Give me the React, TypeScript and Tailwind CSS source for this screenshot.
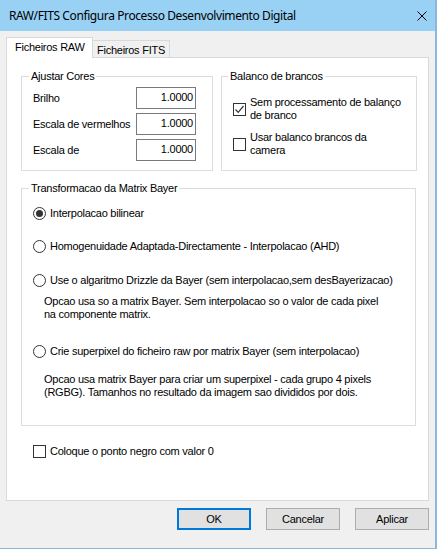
import React from 'react';

const ui = { fontFamily: '"Liberation Sans", Arial, sans-serif' };
const title = { fontFamily: '"Noto Sans", "Open Sans", sans-serif' };

function Check({ checked }: { checked?: boolean }) {
  return (
    <span className="w-[13px] h-[13px] shrink-0 border border-[#333333] bg-white flex items-center justify-center">
      {checked && (
        <svg width="11" height="11" viewBox="0 0 11 11">
          <path d="M1.5 5.5 L4.2 8.3 L9.5 2" fill="none" stroke="#333333" strokeWidth="1.2" />
        </svg>
      )}
    </span>
  );
}

function Radio({ checked }: { checked?: boolean }) {
  return (
    <span className="w-[13px] h-[13px] shrink-0 rounded-full border border-[#333333] bg-white flex items-center justify-center">
      {checked && <span className="w-[7px] h-[7px] rounded-full bg-[#333333]" />}
    </span>
  );
}

function ValueRow({ label }: { label: string }) {
  return (
    <div className="flex items-center justify-between h-[22px]">
      <span>{label}</span>
      <div className="w-[60px] h-[22px] border border-[#7a7a7a] bg-white text-right pr-[2px] leading-[18px]">
        1.0000
      </div>
    </div>
  );
}

export default function App() {
  return (
    <div className="w-[440px] h-[550px] bg-white text-[11px] leading-[13px] tracking-[-0.25px] text-black" style={ui}>
      <div className="w-[437px] h-[549px] flex flex-col bg-[#f0f0f0] border-r-2 border-b border-[#8ab8dd]">
        {/* title bar */}
        <div className="h-[31px] shrink-0 bg-[#99d1f5] flex items-center justify-between pl-[9px] pr-[8px]">
          <span className="text-[12px] tracking-[-0.4px]" style={title}>RAW/FITS Configura Processo Desenvolvimento Digital</span>
          <svg width="10" height="10" viewBox="0 0 10 10">
            <path d="M0.5 0.5 L9.5 9.5 M9.5 0.5 L0.5 9.5" stroke="#000" strokeWidth="1" />
          </svg>
        </div>

        <div className="pl-[6px] pt-[6px] flex flex-col">
          {/* tabs */}
          <div className="flex items-end h-[20px]">
            <div className="relative z-10 w-[87px] h-[21px] -mb-px bg-white border-l border-t border-r border-[#d9d9d9] pl-[8px] pt-[3px]">
              Ficheiros RAW
            </div>
            <div className="w-[77px] h-[17px] border-t border-r border-[#d9d9d9] pl-[4px] pt-[3px]">
              Ficheiros FITS
            </div>
          </div>

          {/* panel */}
          <div className="w-[423px] h-[444px] bg-white border border-[#d9d9d9] pl-[14px] pt-[12px]">
            <div className="flex gap-[8px]">
              <fieldset className="w-[192px] border border-[#dcdcdc]">
                <legend className="ml-[7px] px-[2px]">Ajustar Cores</legend>
                <div className="pt-[4px] pl-[11px] pr-[16px] pb-[9px] flex flex-col gap-[4px]">
                  <ValueRow label="Brilho" />
                  <ValueRow label="Escala de vermelhos" />
                  <ValueRow label="Escala de" />
                </div>
              </fieldset>
              <fieldset className="w-[196px] border border-[#dcdcdc]">
                <legend className="ml-[6px] px-[2px]">Balanco de brancos</legend>
                <div className="pt-[13px] pl-[11px] flex flex-col gap-[9px]">
                  <div className="flex items-center gap-[4px]">
                    <Check checked />
                    <span>Sem processamento de balanço<br />de branco</span>
                  </div>
                  <div className="flex items-center gap-[4px]">
                    <Check />
                    <span>Usar balanco brancos da<br />camera</span>
                  </div>
                </div>
              </fieldset>
            </div>

            <fieldset className="w-[395px] mt-[11px] border border-[#dcdcdc]">
              <legend className="ml-[7px] px-[2px]">Transformacao da Matrix Bayer</legend>
              <div className="pt-[12px] pl-[11px] pb-[26px] flex flex-col">
                <div className="flex items-center gap-[4px]">
                  <Radio checked />
                  <span>Interpolacao bilinear</span>
                </div>
                <div className="flex items-center gap-[4px] mt-[20px]">
                  <Radio />
                  <span>Homogenuidade Adaptada-Directamente - Interpolacao (AHD)</span>
                </div>
                <div className="flex items-center gap-[4px] mt-[21px]">
                  <Radio />
                  <span>Use o algaritmo Drizzle da Bayer (sem interpolacao,sem desBayerizacao)</span>
                </div>
                <p className="ml-[11px] mt-[8px]">
                  Opcao usa so a matrix Bayer. Sem interpolacao so o valor de cada pixel<br />na componente matrix.
                </p>
                <div className="flex items-center gap-[4px] mt-[24px]">
                  <Radio />
                  <span>Crie superpixel do ficheiro raw por matrix Bayer (sem interpolacao)</span>
                </div>
                <p className="ml-[11px] mt-[15px]">
                  Opcao usa matrix Bayer para criar um superpixel - cada grupo 4 pixels<br />(RGBG). Tamanhos no resultado da imagem sao divididos por dois.
                </p>
              </div>
            </fieldset>

            <div className="flex items-center gap-[4px] mt-[19px] pl-[12px]">
              <Check />
              <span>Coloque o ponto negro com valor 0</span>
            </div>
          </div>

          {/* buttons */}
          <div className="w-[423px] mt-[7px] flex justify-end gap-[15px]">
            <button className="w-[74px] h-[22px] bg-[#e1e1e1] border-2 border-[#0078d7]">OK</button>
            <button className="w-[74px] h-[22px] bg-[#e1e1e1] border border-[#adadad]">Cancelar</button>
            <button className="w-[74px] h-[22px] bg-[#e1e1e1] border border-[#adadad]">Aplicar</button>
          </div>
        </div>
      </div>
    </div>
  );
}
